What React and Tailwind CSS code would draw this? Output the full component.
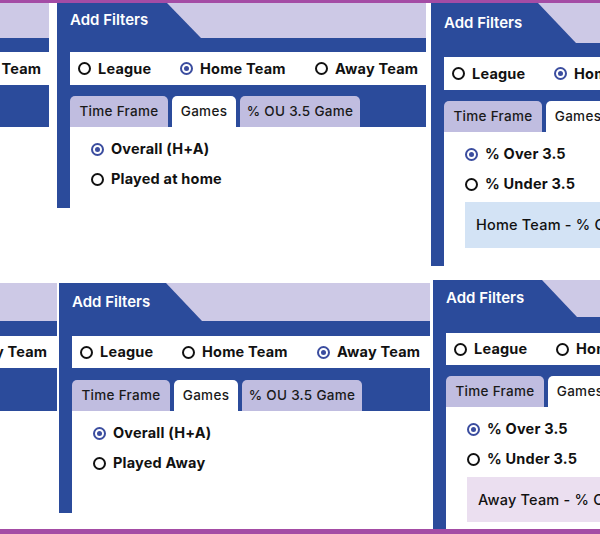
import React from 'react'

const FONT = { fontFamily: 'Inter, "Noto Sans", sans-serif' }

// One radio dot: blue ring with a centre dot when picked, black ring otherwise.
function Radio({ on }) {
  return on ? (
    <span className="w-[13px] h-[13px] rounded-full border-2 border-[#3b4d9f] flex items-center justify-center shrink-0">
      <span className="w-[5px] h-[5px] rounded-full bg-[#3b4d9f]" />
    </span>
  ) : (
    <span className="w-[13px] h-[13px] rounded-full border-2 border-[#111] shrink-0" />
  )
}

function Tabs() {
  return (
    <div className="flex gap-[4px] h-[31px] text-[13.5px] tracking-[0.3px] font-medium text-[#1a1a1a]">
      <div className="w-[98px] rounded-t-[5px] bg-[#c0bde0] flex items-center justify-center">Time Frame</div>
      <div className="w-[64px] rounded-t-[5px] bg-white flex items-center justify-center">Games</div>
      <div className="w-[120px] rounded-t-[5px] bg-[#c0bde0] flex items-center justify-center">% OU 3.5 Game</div>
    </div>
  )
}

function Panel({ p }) {
  const scope = ['League', 'Home Team', 'Away Team']
  return (
    <div className={`${p.w} ${p.h} shrink-0 bg-[#2b4b9b] flex flex-col`}>
      {/* header tab with the slanted edge */}
      <div className={`${p.headH} flex bg-[#cdc9e6] shrink-0`}>
        <div className={`${p.tabW} bg-[#2b4b9b] flex items-center pl-[13px] text-white text-[15px] font-semibold`}>
          Add Filters
        </div>
        <svg width={p.slant} height="100%" viewBox={`0 0 ${p.slant} 40`} preserveAspectRatio="none" className="block">
          <polygon points={`0,0 ${p.slant},40 0,40`} fill="#2b4b9b" />
        </svg>
      </div>
      <div className={`${p.bandH} shrink-0`} />
      <div className={`${p.rowH} ml-[13px] bg-white flex items-center pl-[8px] text-[14.5px] tracking-[0.2px] font-bold text-[#111] shrink-0`}>
        {scope.map((s, i) => (
          <div key={s} className={`flex items-center gap-[7px] ${i === 0 ? 'w-[102px]' : i === 1 ? 'w-[135px]' : ''}`}>
            <Radio on={p.scope === i} />
            <span className="whitespace-nowrap">{s}</span>
          </div>
        ))}
      </div>
      <div className={`${p.gapH} shrink-0`} />
      <div className="ml-[13px] shrink-0">
        <Tabs />
      </div>
      <div className="ml-[13px] bg-white flex-1 pt-[7px] pl-[21px] text-[14.5px] tracking-[0.2px] font-bold text-[#111]">
        {p.options.map((o, i) => (
          <div key={o} className="h-[30px] flex items-center gap-[7px]">
            <Radio on={i === 0} />
            <span>{o}</span>
          </div>
        ))}
        {p.box && (
          <div className={`${p.boxCls} mt-[3px] flex items-center pl-[11px] text-[14.5px] tracking-[0.2px] font-medium whitespace-nowrap`}>
            {p.box}
          </div>
        )}
      </div>
    </div>
  )
}

const games = (second) => ['Overall (H+A)', second]
const ou = ['% Over 3.5', '% Under 3.5']

const A = { w: 'w-[369px]', h: 'h-[205px]', headH: 'h-[35px]', tabW: 'w-[110px]', slant: 34, bandH: 'h-[14px]', rowH: 'h-[33px]', gapH: 'h-[11px]', scope: 2, options: games('Played Away') }
const B = { ...A, scope: 1, options: games('Played at home') }
const C = { ...A, h: 'h-[263px]', headH: 'h-[40px]', tabW: 'w-[107px]', slant: 38, scope: 1, options: ou, box: 'Home Team - % Over 3.5 Games', boxCls: 'h-[46px] bg-[#d3e3f5]' }
const D = { w: 'w-[371px]', h: 'h-[230px]', headH: 'h-[38px]', tabW: 'w-[107px]', slant: 36, bandH: 'h-[15px]', rowH: 'h-[32px]', gapH: 'h-[12px]', scope: 1, options: games('Played at home') }
const E = { ...D, scope: 2, options: games('Played Away') }
const F = { ...D, h: 'h-[270px]', headH: 'h-[37px]', tabW: 'w-[109px]', slant: 35, bandH: 'h-[16px]', gapH: 'h-[11px]', scope: 2, options: ou, box: 'Away Team - % Over 3.5 Games', boxCls: 'h-[45px] bg-[#ebdff0] mt-[1px]' }

export default function App() {
  return (
    <div className="w-[600px] h-[534px] bg-white overflow-hidden flex flex-col" style={FONT}>
      <div className="h-[3px] bg-[#a44ca5] shrink-0" />

      {/* top row */}
      <div className="h-[277px] flex items-start overflow-hidden shrink-0">
        <div className="w-[49px] overflow-hidden shrink-0">
          <div className="-ml-[320px]"><Panel p={A} /></div>
        </div>
        <div className="w-[8px] shrink-0" />
        <Panel p={B} />
        <div className="w-[5px] shrink-0" />
        <div className="flex-1 overflow-hidden">
          <Panel p={C} />
        </div>
      </div>

      {/* bottom row */}
      <div className="h-[249px] flex items-start overflow-hidden shrink-0">
        <div className="w-[57px] overflow-hidden shrink-0 mt-[3px]">
          <div className="-ml-[314px]"><Panel p={D} /></div>
        </div>
        <div className="w-[2px] shrink-0" />
        <div className="mt-[3px]"><Panel p={E} /></div>
        <div className="w-[3px] shrink-0" />
        <div className="flex-1 overflow-hidden">
          <Panel p={F} />
        </div>
      </div>

      <div className="h-[5px] bg-[#a44ca5] shrink-0" />
    </div>
  )
}
